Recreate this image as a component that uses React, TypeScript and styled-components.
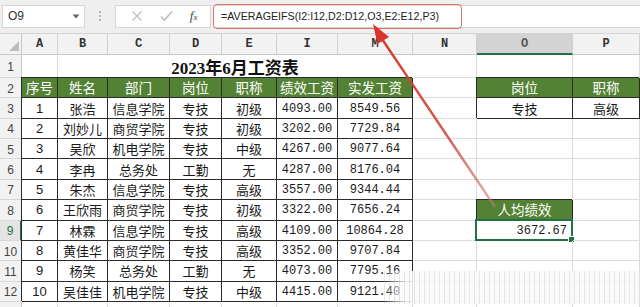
import React from 'react';
import styled, { createGlobalStyle, css } from 'styled-components';

const GlobalStyle = createGlobalStyle`
  html, body {
    margin: 0;
    padding: 0;
    background: #fff;
  }
  body {
    overflow: hidden;
  }
`;

const COLS = '22px 36px 50px 62px 52px 55px 61px 75px 64px 96px 67px';
const GREEN = '#548235';
const SEL = '#217346';

const Page = styled.div`
  position: relative;
  width: 640px;
  height: 307px;
  overflow: hidden;
  font-family: "Noto Sans CJK SC", sans-serif;
  color: #1a1a1a;
`;

const FormulaBar = styled.div`
  display: flex;
  align-items: center;
  height: 34px;
  padding: 0 0 1px 2px;
  box-sizing: border-box;
  background: #efefef;
  border-bottom: 1px solid #d4d4d4;
`;

const NameBox = styled.div`
  display: flex;
  align-items: center;
  justify-content: space-between;
  width: 83px;
  height: 23px;
  box-sizing: border-box;
  padding: 0 4px 0 5px;
  background: #fff;
  border: 1px solid #d6d6d6;
  font: 12px "Liberation Sans", sans-serif;
  color: #333;
`;

const Grip = styled.div`
  display: flex;
  flex-direction: column;
  align-items: center;
  justify-content: center;
  gap: 2px;
  width: 30px;
  & > span {
    width: 2px;
    height: 2px;
    background: #b5b5b5;
  }
`;

const FxBox = styled.div`
  display: flex;
  align-items: center;
  justify-content: space-around;
  width: 96px;
  height: 23px;
  box-sizing: border-box;
  padding: 0 4px 0 6px;
  background: #fff;
  border: 1px solid #d6d6d6;
`;

const Fx = styled.span`
  font: italic 13px "Liberation Serif", serif;
  color: #444;
  & small {
    font-size: 9px;
  }
`;

const FormulaInput = styled.div`
  position: relative;
  flex: 1;
  display: flex;
  align-items: center;
  height: 23px;
  margin-left: 2px;
  padding-left: 8px;
  background: #fff;
  border-top: 1px solid #d6d6d6;
  border-bottom: 1px solid #d6d6d6;
  box-sizing: border-box;
  font: 10.7px "Liberation Sans", sans-serif;
  color: #222;
`;

const Mark = styled.div`
  position: absolute;
  left: 0;
  top: -2px;
  width: 249px;
  height: 25px;
  box-sizing: border-box;
  border: 1.5px solid #e07068;
  border-radius: 4px;
`;

const Sheet = styled.div`
  display: grid;
  grid-template-columns: ${COLS};
  grid-template-rows: 21px 23px repeat(12, 20.36px);
`;

const ColHead = styled.div<{ $active?: boolean }>`
  display: flex;
  align-items: center;
  justify-content: center;
  box-sizing: border-box;
  background: ${(p) => (p.$active ? '#d3d3d3' : '#f2f2f2')};
  border-right: 1px solid #d0d0d0;
  border-bottom: ${(p) => (p.$active ? `2px solid ${SEL}` : '1px solid #c8c8c8')};
  font: bold 12px "Liberation Mono", monospace;
  color: ${(p) => (p.$active ? '#555' : '#333')};
`;

const Corner = styled.div`
  display: flex;
  align-items: flex-end;
  justify-content: flex-end;
  padding: 0 2px 3px 0;
  box-sizing: border-box;
  background: #f2f2f2;
  border-right: 1px solid #c8c8c8;
  border-bottom: 1px solid #c8c8c8;
`;

const RowHead = styled.div<{ $active?: boolean }>`
  display: flex;
  align-items: center;
  justify-content: center;
  box-sizing: border-box;
  background: ${(p) => (p.$active ? '#e4e4e4' : '#f2f2f2')};
  border-right: ${(p) => (p.$active ? `2px solid ${SEL}` : '1px solid #c8c8c8')};
  border-bottom: 1px solid #d8d8d8;
  padding-top: 2px;
  font: 12px "Liberation Sans", sans-serif;
  color: ${(p) => (p.$active ? SEL : '#444')};
`;

type Kind = 'plain' | 'head' | 'data';

const Cell = styled.div<{ $kind?: Kind; $mono?: boolean; $sans?: boolean; $right?: boolean; $span?: number }>`
  position: relative;
  display: flex;
  align-items: center;
  justify-content: ${(p) => (p.$right ? 'flex-end' : 'center')};
  min-width: 0;
  box-sizing: border-box;
  padding: 0 ${(p) => (p.$right ? '5px' : '2px')} 0 2px;
  border-right: 1px solid #dcdcdc;
  border-bottom: 1px solid #dcdcdc;
  font-size: 13px;
  line-height: 1;
  white-space: nowrap;
  grid-column: ${(p) => (p.$span ? `span ${p.$span}` : 'auto')};
  ${(p) =>
    p.$mono &&
    css`
      font-family: "Liberation Mono", monospace;
      font-size: 12px;
      padding-top: 1px;
    `}
  ${(p) =>
    p.$sans &&
    css`
      font-family: "Liberation Sans", sans-serif;
    `}
  ${(p) =>
    p.$kind === 'head' &&
    css`
      background: ${GREEN};
      color: #fff;
      border-color: #2a2a2a;
      box-shadow: -1px -1px 0 #2a2a2a;
      font-size: 13.5px;
    `}
  ${(p) =>
    p.$kind === 'data' &&
    css`
      border-color: #2a2a2a;
      box-shadow: -1px -1px 0 #2a2a2a;
    `}
`;

const Title = styled(Cell)`
  border-right-color: transparent;
  padding-left: 2px;
  font: bold 17px "Liberation Serif", "Noto Sans CJK SC", serif;
  color: #111;
`;

const Selected = styled.div`
  position: absolute;
  inset: -2px -1px -1px -2px;
  border: 2px solid ${SEL};
  pointer-events: none;
  &::after {
    content: '';
    position: absolute;
    right: -4px;
    bottom: -4px;
    width: 5px;
    height: 5px;
    background: ${SEL};
    border: 1px solid #fff;
  }
`;

const Overlay = styled.svg`
  position: absolute;
  left: 0;
  top: 0;
  pointer-events: none;
`;

const Watermark = styled.div`
  position: absolute;
  left: 384px;
  top: 271px;
  width: 256px;
  height: 33px;
  background:
    repeating-linear-gradient(90deg, rgba(170, 170, 170, 0.28) 0 1px, transparent 1px 5px),
    linear-gradient(90deg, rgba(255, 255, 255, 0) 0, rgba(250, 250, 250, 0.88) 22px);
`;

const letters = ['A', 'B', 'C', 'D', 'E', 'I', 'M', 'N', 'O', 'P'];
const heads = ['序号', '姓名', '部门', '岗位', '职称', '绩效工资', '实发工资'];
const rows = [
  ['1', '张浩', '信息学院', '专技', '初级', '4093.00', '8549.56'],
  ['2', '刘妙儿', '商贸学院', '专技', '初级', '3202.00', '7729.84'],
  ['3', '吴欣', '机电学院', '专技', '中级', '4267.00', '9077.64'],
  ['4', '李冉', '总务处', '工勤', '无', '4287.00', '8176.04'],
  ['5', '朱杰', '信息学院', '专技', '高级', '3557.00', '9344.44'],
  ['6', '王欣雨', '商贸学院', '专技', '初级', '3322.00', '7656.24'],
  ['7', '林霖', '信息学院', '专技', '高级', '4109.00', '10864.28'],
  ['8', '黄佳华', '商贸学院', '专技', '高级', '3352.00', '9707.84'],
  ['9', '杨笑', '总务处', '工勤', '无', '4073.00', '7795.16'],
  ['10', '吴佳佳', '机电学院', '专技', '中级', '4415.00', '9121.40'],
];

const sideCells = (r: number) => {
  // columns O and P next to the table
  if (r === 2)
    return [
      <Cell key="o" $kind="head">岗位</Cell>,
      <Cell key="p" $kind="head">职称</Cell>,
    ];
  if (r === 3)
    return [
      <Cell key="o" $kind="data">专技</Cell>,
      <Cell key="p" $kind="data">高级</Cell>,
    ];
  if (r === 8)
    return [<Cell key="o" $kind="head">人均绩效</Cell>, <Cell key="p" />];
  if (r === 9)
    return [
      <Cell key="o" $mono $right>
        3672.67
        <Selected />
      </Cell>,
      <Cell key="p" />,
    ];
  return [<Cell key="o" />, <Cell key="p" />];
};

const App = () => {
  return (
    <Page>
      <GlobalStyle />
      <FormulaBar>
        <NameBox>
          O9
          <svg width="8" height="5" viewBox="0 0 8 5">
            <path d="M0.5 0.5 H7.5 L4 4.5 Z" fill="#666" />
          </svg>
        </NameBox>
        <Grip>
          <span />
          <span />
          <span />
        </Grip>
        <FxBox>
          <svg width="12" height="12" viewBox="0 0 12 12">
            <path d="M1.5 1.5 L10.5 10.5 M10.5 1.5 L1.5 10.5" stroke="#bdbdbd" strokeWidth="1.3" />
          </svg>
          <svg width="13" height="12" viewBox="0 0 13 12">
            <path d="M1 6.5 L4.5 10 L12 1.5" stroke="#bdbdbd" strokeWidth="1.6" fill="none" />
          </svg>
          <Fx>
            f<small>x</small>
          </Fx>
        </FxBox>
        <FormulaInput>
          =AVERAGEIFS(I2:I12,D2:D12,O3,E2:E12,P3)
          <Mark />
        </FormulaInput>
      </FormulaBar>

      <Sheet>
        <Corner>
          <svg width="10" height="10" viewBox="0 0 10 10">
            <path d="M10 0 V10 H0 Z" fill="#bdbdbd" />
          </svg>
        </Corner>
        {letters.map((l) => (
          <ColHead key={l} $active={l === 'O'}>
            {l}
          </ColHead>
        ))}

        <RowHead>1</RowHead>
        <Cell />
        <Title $span={6}>2023年6月工资表</Title>
        <Cell />
        <Cell />
        <Cell />

        <RowHead>2</RowHead>
        {heads.map((h) => (
          <Cell key={h} $kind="head">
            {h}
          </Cell>
        ))}
        <Cell />
        {sideCells(2)}

        {rows.map((row, i) => {
          const r = i + 3;
          return (
            <React.Fragment key={r}>
              <RowHead $active={r === 9}>{r}</RowHead>
              {row.map((v, j) => (
                <Cell key={j} $kind="data" $mono={j >= 5} $sans={j === 0}>
                  {v}
                </Cell>
              ))}
              <Cell />
              {sideCells(r)}
            </React.Fragment>
          );
        })}

        <RowHead />
        {letters.map((l) => (
          <Cell key={l} />
        ))}
      </Sheet>

      <Overlay width="640" height="307" viewBox="0 0 640 307">
        <defs>
          <linearGradient id="fade" x1="374" y1="27" x2="495" y2="207" gradientUnits="userSpaceOnUse">
            <stop offset="0" stopColor="#d8362a" />
            <stop offset="0.6" stopColor="#cf4a3e" stopOpacity="0.9" />
            <stop offset="1" stopColor="#c97b70" stopOpacity="0.55" />
          </linearGradient>
        </defs>
        <line x1="380" y1="36" x2="495" y2="207" stroke="url(#fade)" strokeWidth="2.4" />
        <path d="M373 24 L389 37 L377.5 44 Z" fill="#d8362a" />
      </Overlay>
      <Watermark />
    </Page>
  );
};

export default App;
